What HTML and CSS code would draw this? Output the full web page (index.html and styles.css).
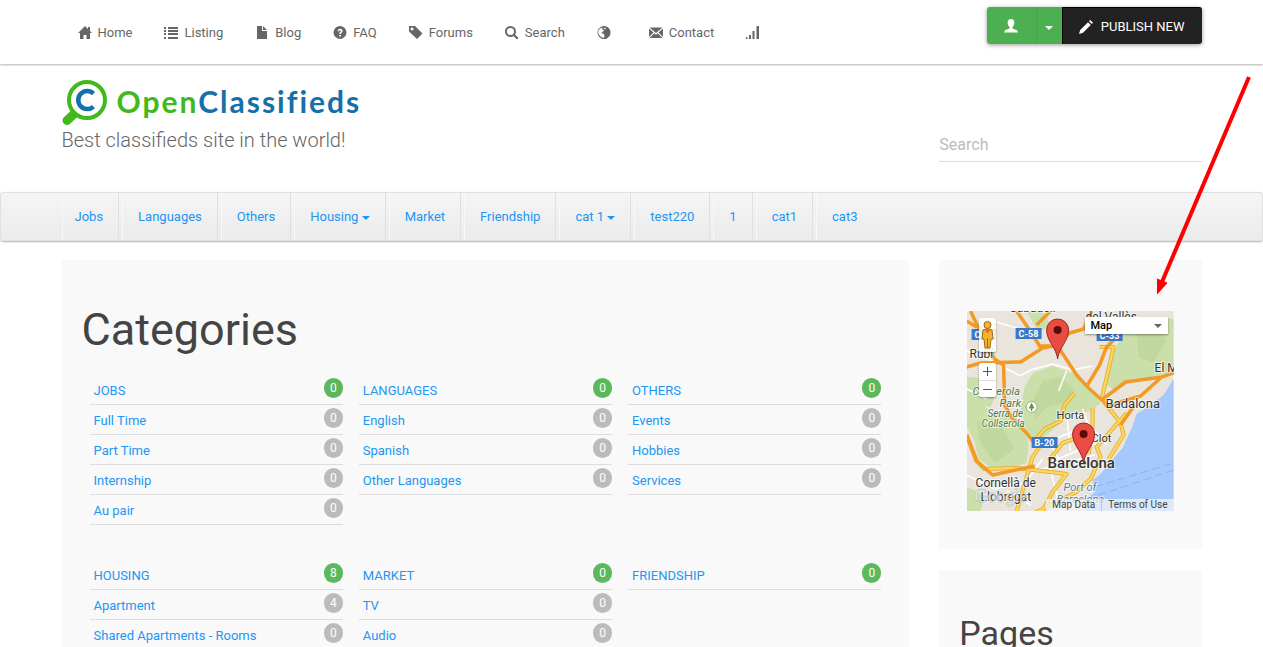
FILE: index.html
```html
<!DOCTYPE html>
<html lang="en">
<head>
    <meta charset="UTF-8">
    <meta name="viewport" content="width=device-width, initial-scale=1.0">
    <title>Open Classifieds</title>
    <link rel="stylesheet" href="styles.css">
</head>
<body>
    <!-- Top bar -->
    <header class="topbar">
        <div class="container topbar-inner">
            <nav class="top-nav">
                <a href="#"><svg class="icon" viewBox="0 0 14 14"><path d="M7 0L0 7h2v6h3.500V9h3v4H12V7h2l-2-2V1h-2v2z"/></svg>Home</a>
                <a href="#"><svg class="icon" viewBox="0 0 14 14"><path d="M0 1h2v2H0zM4 1h10v2H4zM0 4h2v2H0zM4 4h10v2H4zM0 7h2v2H0zM4 7h10v2H4zM0 11h2v2H0zM4 11h10v2H4z"/></svg>Listing</a>
                <a href="#"><svg class="icon" viewBox="0 0 14 14"><path d="M2 0h5v5h5v8H2zM8 0l4 4H8z"/></svg>Blog</a>
                <a href="#"><svg class="icon" viewBox="0 0 14 14"><circle cx="7" cy="6.500" r="6.500"/><path class="cut" d="M4.600 5.200C4.600 1.800 9.600 1.900 9.600 4.900c0 1.900-1.800 1.700-1.800 3.200H6.200c0-2.200 1.700-2 1.700-3.100 0-1.200-1.600-1.100-1.600.2zM6.200 9h1.700v1.600H6.200z"/></svg>FAQ</a>
                <a href="#"><svg class="icon" viewBox="0 0 14 14"><path fill-rule="evenodd" d="M0 0h6l7.500 7.500L8 13 0 5.500zM3 1.500a1.500 1.500 0 1 0 .1 0z"/></svg>Forums</a>
                <a href="#"><svg class="icon" viewBox="0 0 14 14"><circle cx="5.500" cy="5.500" r="4.500" fill="none" stroke="currentColor" stroke-width="2"/><path d="M8 9.500L9.500 8l4 4-1.500 1.500z"/></svg>Search</a>
                <a href="#" aria-label="Language"><svg class="icon" viewBox="0 0 14 14"><path fill-rule="evenodd" d="M7 0a6.500 6.500 0 1 0 .1 0zM7.500 1.500L9 2.500 8 3.500 7 3zM6 1.500L5 3l2 1.500L5.500 6 4 7l3 1 .5 2L7 12l-3-1-2.500-3-.3-3L3 2.500z"/></svg></a>
                <a href="#"><svg class="icon" viewBox="0 0 14 14"><path d="M.5 1.500h13L7 7zM0 2.500l4.500 4L0 11zM14 2.500l-4.500 4L14 11zM.5 12L5.300 7.300 7 8.700l1.700-1.400L13.500 12z"/></svg>Contact</a>
                <a href="#" aria-label="Stats"><svg class="icon" viewBox="0 0 14 14"><path d="M0 11h1.500v2H0zM3 9h2v4H3zM6.500 5h2v8h-2zM10.500 0H13v13h-2.500z"/></svg></a>
            </nav>
            <div class="actions">
                <button class="btn btn-user" type="button" aria-label="Account"><svg class="icon" viewBox="0 0 14 14"><path d="M7 0C4.500 0 3.500 1.800 3.700 4c.1 1.800.7 3 1.800 4v1.500L1 11.200 0 13.500h14l-1-2.300-4.500-1.700V8c1.100-1 1.700-2.200 1.800-4C10.500 1.800 9.500 0 7 0z"/></svg></button>
                <button class="btn btn-caret" type="button" aria-label="Account menu"><span class="caret"></span></button>
                <button class="btn btn-publish" type="button"><svg class="icon" viewBox="0 0 14 14"><path d="M0 14l1.200-4L9 2.200 11.800 5 4 12.800zM10 1.200L11.200 0 14 2.800 12.800 4z"/></svg>PUBLISH NEW</button>
            </div>
        </div>
    </header>

    <!-- Logo, tagline and search -->
    <div class="container masthead">
        <div class="brand">
            <a class="logo" href="#">
                <svg class="logo-mark" viewBox="0 0 46 46">
                    <path d="M13 33L5 40.500" fill="none" stroke="#41b91a" stroke-width="9" stroke-linecap="round"/>
                    <circle cx="25" cy="20" r="18" fill="#fff" stroke="#41b91a" stroke-width="4"/>
                    <path d="M31.500 13.500a9 9 0 1 0 0 13" fill="none" stroke="#156fa8" stroke-width="4.500"/>
                </svg>
                <span class="logo-text">Open<span>Classifieds</span></span>
            </a>
            <p class="tagline">Best classifieds site in the world!</p>
        </div>
        <form class="search">
            <input type="search" placeholder="Search" aria-label="Search">
        </form>
    </div>

    <!-- Category bar -->
    <nav class="category-bar">
        <ul class="container category-list">
            <li><a href="#">Jobs</a></li>
            <li><a href="#">Languages</a></li>
            <li><a href="#">Others</a></li>
            <li><a href="#">Housing <span class="caret"></span></a></li>
            <li><a href="#">Market</a></li>
            <li><a href="#">Friendship</a></li>
            <li><a href="#">cat 1 <span class="caret"></span></a></li>
            <li><a href="#">test220</a></li>
            <li><a href="#">1</a></li>
            <li><a href="#">cat1</a></li>
            <li><a href="#">cat3</a></li>
        </ul>
    </nav>

    <div class="container content">
        <main class="panel categories">
            <h1>Categories</h1>
            <div class="category-grid">
                <ul>
                    <li><a href="#">JOBS</a><span class="badge badge-main">0</span></li>
                    <li><a href="#">Full Time</a><span class="badge">0</span></li>
                    <li><a href="#">Part Time</a><span class="badge">0</span></li>
                    <li><a href="#">Internship</a><span class="badge">0</span></li>
                    <li><a href="#">Au pair</a><span class="badge">0</span></li>
                </ul>
                <ul>
                    <li><a href="#">LANGUAGES</a><span class="badge badge-main">0</span></li>
                    <li><a href="#">English</a><span class="badge">0</span></li>
                    <li><a href="#">Spanish</a><span class="badge">0</span></li>
                    <li><a href="#">Other Languages</a><span class="badge">0</span></li>
                </ul>
                <ul>
                    <li><a href="#">OTHERS</a><span class="badge badge-main">0</span></li>
                    <li><a href="#">Events</a><span class="badge">0</span></li>
                    <li><a href="#">Hobbies</a><span class="badge">0</span></li>
                    <li><a href="#">Services</a><span class="badge">0</span></li>
                </ul>
                <ul>
                    <li><a href="#">HOUSING</a><span class="badge badge-main">8</span></li>
                    <li><a href="#">Apartment</a><span class="badge">4</span></li>
                    <li><a href="#">Shared Apartments - Rooms</a><span class="badge">0</span></li>
                </ul>
                <ul>
                    <li><a href="#">MARKET</a><span class="badge badge-main">0</span></li>
                    <li><a href="#">TV</a><span class="badge">0</span></li>
                    <li><a href="#">Audio</a><span class="badge">0</span></li>
                </ul>
                <ul>
                    <li><a href="#">FRIENDSHIP</a><span class="badge badge-main">0</span></li>
                </ul>
            </div>
        </main>

        <aside class="sidebar">
            <section class="panel map-panel">
                <div class="map">
                    <svg class="map-canvas" viewBox="0 0 207 200" preserveAspectRatio="xMidYMid slice">
                        <rect width="207" height="200" fill="#e9e5dc"/>
                        <!-- parks -->
                        <g fill="#cadfaa">
                            <path d="M0 84l14 6 10 12 20 0 14 12 4 20-2 18-12 4-22 2-14-10L8 130 0 116z"/>
                            <path d="M66 62l20-7 22 8 12 13 14 16-10 8-24 6-22 20-6 8-12-14-6-22 4-22z"/>
                            <path d="M150 34l14-20 14-8 29 2v52l-20 6-22 4-16 10-12-8 6-20z"/>
                            <path d="M0 66l22 2 8 14-6 14-24-6zM60 0h16l8 14-12 8zM0 176l18 8-4 16H0z"/>
                        </g>
                        <g fill="#b9d396" opacity=".6">
                            <path d="M76 70l18-4 14 12-10 14-18 4-10 12-6-14zM170 22l18-8 12 16-14 22-14-6zM10 110l24 4 14 24-20 14-14-20z"/>
                        </g>
                        <!-- sea -->
                        <path d="M207 68l-10 16-14 11-13 8-4 12-10 22-14 16-8 10-8 6 2 12-8 8-2 11h89z" fill="#a5c9fd"/>
                        <path d="M128 176l79-24M120 188l87-29" stroke="#8ab3ee" stroke-dasharray="8 4" fill="none"/>
                        <!-- local roads -->
                        <g fill="none" stroke="#fff" stroke-width="1.500">
                            <path d="M38 57l16 8 10-6 22-6 20 6 20-4M86 150l44-18M74 134l38-16M68 160l60-16M82 150l12 50M104 140l-4-38M0 40l30 12M120 110l20 24M60 170l16-22M28 178l40-8M150 110l10-8M0 78l20 10"/>
                            <path d="M20 8l40 12M100 60l-8 20M84 134l14 24M116 98l10 28M40 180l24 14M0 164l28 14"/>
                        </g>
                        <!-- main roads -->
                        <g fill="none" stroke-linejoin="round">
                            <g stroke="#e2a62c" stroke-width="4">
                                <path d="M0 124l10 26 8 8 32-1 34 4 16 2-14 18-10 19M74 134l-8 12-6 20-10 34M68 130l10-12 16-8 4-16 10-12M82 150l14-18 28-10M160 102l-30 34 4 10-10 22-16 14-40 20"/>
                                <path d="M126 97l0 18-4 28M140 94l14 18 3 12-15 24M133 36h14l-6 26-6 26"/>
                            </g>
                            <g stroke="#fbd75a" stroke-width="2.500">
                                <path d="M0 124l10 26 8 8 32-1 34 4 16 2-14 18-10 19M74 134l-8 12-6 20-10 34M68 130l10-12 16-8 4-16 10-12M82 150l14-18 28-10M160 102l-30 34 4 10-10 22-16 14-40 20"/>
                                <path d="M126 97l0 18-4 28M140 94l14 18 3 12-15 24M133 36h14l-6 26-6 26"/>
                            </g>
                            <path stroke="#f29a24" stroke-width="3.500" d="M4 0l10 22 14 26 9 6 1 40 8 14 14 14 6 8M0 56l14-4 40-1 22-14 16-3M50 0l13 19 10 16 18 0 19 29 10 11 15 14 24-18 36-5 20-7M90 34l13-12 14-4 8-18M160 16l-20 20-7 18-12 20M136 89l4 6 34-10 20-18M168 94l-14 20M0 124l10 26 16 14 42-9M84 0l-14 14M0 10l10 6"/>
                        </g>
                        <!-- road shields -->
                        <g class="shield">
                            <rect x="5" y="18" width="24" height="11"/><text x="8" y="27">C-58</text>
                            <rect x="49" y="17" width="26" height="11"/><text x="52" y="26">C-58</text>
                            <rect x="130" y="19" width="26" height="11"/><text x="133" y="28">C-33</text>
                            <rect x="65" y="126" width="26" height="11"/><text x="68" y="135">B-20</text>
                        </g>
                        <!-- place names -->
                        <g class="place">
                            <text x="43" y="1" class="town">Sabadell</text>
                            <text x="119" y="10" class="town">del Vallès</text>
                            <text x="3" y="47" class="town">Rubí</text>
                            <text x="188" y="61" class="town">El Masnou</text>
                            <text x="139" y="97" class="city">Badalona</text>
                            <text x="6" y="84" class="park">Collserola</text>
                            <text x="33" y="96" class="park">Park</text>
                            <text x="21" y="106" class="park small">Serra de</text>
                            <text x="15" y="116" class="park small">Collserola</text>
                            <text x="90" y="108" class="area">Horta</text>
                            <text x="125" y="131" class="area">Clot</text>
                            <text x="81" y="157" class="capital">Barcelona</text>
                            <text x="9" y="176" class="town">Cornellà de</text>
                            <text x="14" y="190" class="town">Llobregat</text>
                            <text x="97" y="180" class="port">Port of</text>
                            <text x="90" y="192" class="port">Barcelona</text>
                        </g>
                        <circle cx="65" cy="96" r="5.500" fill="#fff" stroke="#9aac88"/>
                        <path d="M65 91.500l3 6h-2.300v2.500h-1.400v-2.500H62z" fill="#5aa02c"/>
                        <text x="8" y="191" class="google">Google</text>
                        <!-- markers -->
                        <g id="pin">
                            <path d="M91 48C90 37 80 30 80 19a11 11 0 0 1 22 0C102 30 92 37 91 48z" fill="#ea4b42" stroke="#9c2a24"/>
                            <circle cx="91" cy="19" r="4" fill="#5c0b0b"/>
                        </g>
                        <use href="#pin" x="26" y="104"/>
                    </svg>
                    <svg class="pegman" viewBox="0 0 17 34">
                        <circle cx="8.500" cy="7" r="3.500" fill="#f4b32c" stroke="#9b6a10"/>
                        <path d="M4 12q4.500-3 9 0l1 9h-2l-1 9H6l-1-9H3z" fill="#f4b32c" stroke="#9b6a10"/>
                        <path d="M5.500 11.500h6l-3 4z" fill="#ee5b4c"/>
                        <path d="M8.500 20v10" stroke="#9b6a10"/>
                    </svg>
                    <div class="map-zoom">
                        <button type="button" aria-label="Zoom in"><svg viewBox="0 0 9 9"><path d="M0 4h9v1H0zM4 0h1v9H4z"/></svg></button>
                        <button type="button" aria-label="Zoom out"><svg viewBox="0 0 9 9"><path d="M0 4h9v1H0z"/></svg></button>
                    </div>
                    <div class="map-type">
                        <select aria-label="Map type"><option>Map</option></select>
                        <span class="caret"></span>
                    </div>
                    <div class="map-legal"><a href="#">Map Data</a><a href="#">Terms of Use</a></div>
                </div>
            </section>
            <section class="panel pages-panel">
                <h2>Pages</h2>
            </section>
        </aside>
    </div>

    <!-- Arrow pointing at the map -->
    <svg class="arrow" viewBox="0 0 94 218">
        <path d="M92 1L5 206" stroke="#f00" stroke-width="4"/>
        <path d="M0 203l10 4L0 218z" fill="#f00" stroke="#f00"/>
    </svg>
</body>
</html>
```

FILE: styles.css
```css
* {
    box-sizing: border-box;
}

body {
    margin: 0;
    height: 100vh;
    overflow: hidden;
    position: relative;
    font-family: Roboto, "Liberation Sans", sans-serif;
    font-size: 13px;
    line-height: 24px;
    color: #666;
    background: #fff;
}

a {
    color: #2196f3;
    text-decoration: none;
}

ul {
    list-style: none;
    margin: 0;
    padding: 0;
}

h1, h2 {
    margin: 0;
    font-weight: 400;
    color: #444;
}

.container {
    width: 100%;
    max-width: 1170px;
    margin: 0 auto;
    padding: 0 15px;
}

.icon {
    width: 14px;
    height: 14px;
    fill: currentColor;
}

.icon .cut {
    fill: #fff;
}

.caret {
    display: inline-block;
    border: 4px solid transparent;
    border-top-color: currentColor;
    border-bottom: 0;
    vertical-align: middle;
}

/* Top bar */
.topbar {
    box-shadow: 0 1px 2px rgba(0, 0, 0, 0.3);
}

.topbar-inner {
    display: flex;
    justify-content: space-between;
    align-items: flex-start;
}

.top-nav {
    display: flex;
    gap: 1px;
}

.top-nav a {
    display: flex;
    align-items: center;
    height: 64px;
    padding: 2px 15px 0 16px;
    color: #666;
}

.top-nav .icon {
    margin-right: 6px;
}

.actions {
    display: flex;
    margin-top: 7px;
    border-radius: 3px;
    box-shadow: 0 1px 4px rgba(0, 0, 0, 0.4);
}

.btn {
    display: flex;
    align-items: center;
    justify-content: center;
    height: 37px;
    padding: 0 16px;
    border: 0;
    font: inherit;
    color: #fff;
    background: #4caf50;
    cursor: pointer;
}

.btn-user {
    width: 49px;
    border-radius: 3px 0 0 3px;
}

.btn-caret {
    width: 26px;
    padding: 4px 0 0;
    border-left: 1px solid #46a54a;
}

.btn-publish {
    gap: 8px;
    padding: 1px 17px 0 16px;
    background: #222;
    border: 1px solid #000;
    border-width: 1px 0 0 1px;
    border-radius: 0 3px 3px 0;
}

/* Logo and search */
.masthead {
    display: grid;
    grid-template-columns: 1fr 23%;
    column-gap: 30px;
    padding-top: 16px;
    padding-bottom: 30px;
}

.logo {
    display: flex;
    align-items: flex-start;
    gap: 9px;
    height: 46px;
}

.logo-mark {
    width: 46px;
    height: 46px;
}

.logo-text {
    font-family: Lato, sans-serif;
    font-size: 30px;
    font-weight: 700;
    line-height: 42px;
    letter-spacing: 2px;
    color: #41b91a;
}

.logo-text span {
    color: #156fa8;
}

.tagline {
    margin: 2px 0 10px;
    font-size: 20px;
    font-weight: 300;
}

.search {
    align-self: end;
}

.search input {
    display: block;
    width: 100%;
    height: 35px;
    padding: 0;
    border: 0;
    border-bottom: 1px solid #ddd;
    outline: 0;
    font: inherit;
    font-size: 16px;
    background: transparent;
    appearance: none;
}

.search input::placeholder {
    color: #bbb;
}

/* Category bar */
.category-bar {
    border: 1px solid #e0e0e0;
    border-radius: 3px;
    background: linear-gradient(#f5f5f5, #ebebeb);
    box-shadow: 0 1px 2px rgba(0, 0, 0, 0.3);
}

.category-list {
    display: flex;
    gap: 3px;
}

.category-list li {
    border-left: 1px solid #f8f8f8;
    border-right: 1px solid #e0e0e0;
}

.category-list li:last-child {
    border-right: 0;
}

.category-list a {
    display: block;
    padding: 12px 15px 11px;
}

.category-list li:first-child a {
    padding-left: 12px;
}

/* Main content */
.content {
    display: grid;
    grid-template-columns: 1fr 23%;
    column-gap: 30px;
    padding-top: 19px;
}

.panel {
    background: #f9f9f9;
}

.categories {
    padding: 45px 20px;
}

h1 {
    font-size: 45px;
    line-height: 50px;
}

.category-grid {
    display: grid;
    grid-template-columns: repeat(3, 1fr);
    gap: 35px 16px;
    padding: 20px 8px 0;
}

.category-grid li {
    display: flex;
    justify-content: space-between;
    align-items: flex-start;
    height: 30px;
    padding: 3px 0 0 4px;
    border-bottom: 1px solid #ddd;
}

.category-grid a {
    padding-top: 1px;
}

.badge {
    min-width: 19px;
    height: 20px;
    border-radius: 10px;
    font-size: 12px;
    line-height: 20px;
    text-align: center;
    color: #fff;
    background: #bbb;
}

.badge-main {
    background: #5cb85c;
}

.sidebar {
    display: flex;
    flex-direction: column;
    gap: 21px;
}

.map-panel {
    padding: 51px 28px 38px;
}

.pages-panel {
    padding: 42px 20px;
}

h2 {
    font-size: 34px;
    line-height: 42px;
}

/* Map */
.map {
    position: relative;
    height: 200px;
    overflow: hidden;
}

.map-canvas {
    display: block;
    width: 100%;
    height: 100%;
}

.shield rect {
    fill: #3c78c8;
}

.shield text {
    font-size: 9px;
    font-weight: 700;
    fill: #fff;
}

.place text {
    fill: #333;
    stroke: #fff;
    stroke-width: 2px;
    stroke-opacity: 0.6;
    paint-order: stroke;
}

.place .town {
    font-size: 12px;
}

.place .city {
    font-size: 13px;
}

.place .capital {
    font-size: 15px;
    font-weight: 500;
}

.place .area {
    font-size: 11px;
}

.place .park {
    font-size: 11px;
    font-style: italic;
    fill: #4c7a4c;
}

.place .small {
    font-size: 10px;
}

.place .port {
    font-size: 11px;
    font-style: italic;
    fill: #5b7a9e;
}

.google {
    font-family: "Liberation Serif", serif;
    font-size: 18px;
    fill: #fff;
    fill-opacity: 0.8;
    stroke: #999;
    stroke-opacity: 0.4;
}

.pegman {
    position: absolute;
    left: 12px;
    top: 7px;
    width: 17px;
    height: 34px;
    border-radius: 2px;
    background: rgba(255, 255, 255, 0.85);
    box-shadow: 0 1px 2px rgba(0, 0, 0, 0.4);
}

.map-zoom {
    position: absolute;
    left: 12px;
    top: 52px;
    width: 17px;
    border-radius: 2px;
    background: #fff;
    box-shadow: 0 1px 2px rgba(0, 0, 0, 0.4);
}

.map-zoom button {
    display: flex;
    align-items: center;
    justify-content: center;
    width: 17px;
    height: 17px;
    padding: 0;
    border: 0;
    background: transparent;
}

.map-zoom button + button {
    border-top: 1px solid #ddd;
}

.map-zoom svg {
    width: 9px;
    height: 9px;
    fill: #555;
}

.map-type {
    position: absolute;
    right: 6px;
    top: 6px;
    width: 83px;
    color: #666;
    background: #fff;
    box-shadow: 0 1px 2px rgba(0, 0, 0, 0.4);
}

.map-type select {
    display: block;
    width: 100%;
    height: 17px;
    padding: 0 6px;
    border: 0;
    font: 500 11px Roboto, sans-serif;
    color: #000;
    background: transparent;
    appearance: none;
}

.map-type .caret {
    position: absolute;
    right: 6px;
    top: 7px;
}

.map-legal {
    position: absolute;
    right: 0;
    bottom: 0;
    display: flex;
    font-size: 10px;
    line-height: 12px;
    background: rgba(245, 245, 245, 0.7);
}

.map-legal a {
    padding: 0 6px;
    color: #444;
}

.map-legal a + a {
    border-left: 1px solid #a5c9fd;
}

/* Arrow */
.arrow {
    position: absolute;
    left: calc(50% + 525px);
    top: 76px;
    width: 94px;
    height: 218px;
}
```
